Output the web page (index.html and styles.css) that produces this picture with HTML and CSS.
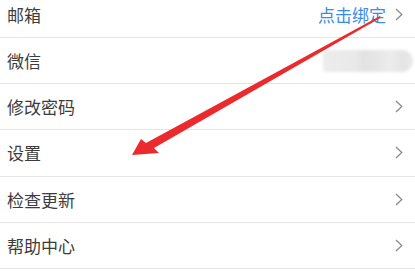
FILE: index.html
```
<!DOCTYPE html>
<html lang="zh">
<head>
<meta charset="utf-8">
<link rel="stylesheet" href="styles.css">
</head>
<body>
<div class="page">
  <ul class="list">
    <li class="row"><span class="label">邮箱</span><span class="right"><span class="link">点击绑定</span><svg class="chev" width="8" height="13" viewBox="0 0 8 13"><polyline points="1,1 6.8,6.5 1,12" fill="none" stroke="#8c8c8c" stroke-width="1.3"/></svg></span></li>
    <li class="row"><span class="label">微信</span><span class="right"><span class="blur"></span></span></li>
    <li class="row"><span class="label">修改密码</span><span class="right"><svg class="chev" width="8" height="13" viewBox="0 0 8 13"><polyline points="1,1 6.8,6.5 1,12" fill="none" stroke="#8c8c8c" stroke-width="1.3"/></svg></span></li>
    <li class="row"><span class="label">设置</span><span class="right"><svg class="chev" width="8" height="13" viewBox="0 0 8 13"><polyline points="1,1 6.8,6.5 1,12" fill="none" stroke="#8c8c8c" stroke-width="1.3"/></svg></span></li>
    <li class="row"><span class="label">检查更新</span><span class="right"><svg class="chev" width="8" height="13" viewBox="0 0 8 13"><polyline points="1,1 6.8,6.5 1,12" fill="none" stroke="#8c8c8c" stroke-width="1.3"/></svg></span></li>
    <li class="row"><span class="label">帮助中心</span><span class="right"><svg class="chev" width="8" height="13" viewBox="0 0 8 13"><polyline points="1,1 6.8,6.5 1,12" fill="none" stroke="#8c8c8c" stroke-width="1.3"/></svg></span></li>
  </ul>
  <svg class="arrow" width="415" height="271" viewBox="0 0 415 271">
    <polygon points="132,155 159,153 154,148 381,17.5 380,16 146,143 141,139" fill="#ea2a2c"/>
  </svg>
</div>
</body>
</html>
```
FILE: styles.css
```
html, body {
  margin: 0;
  padding: 0;
  background: #ffffff;
}
.page {
  position: relative;
  width: 415px;
  height: 271px;
  overflow: hidden;
  font-family: "Noto Sans CJK SC", "Noto Sans", sans-serif;
}
.list {
  list-style: none;
  margin: -8.2px 0 0 0;
  padding: 0;
}
.row {
  height: 45.2px;
  border-bottom: 1px solid #e4e4e4;
  display: flex;
  align-items: center;
  justify-content: space-between;
  padding: 0 12px 0 7px;
  font-size: 17px;
  color: #3c3c3c;
}
.right {
  display: flex;
  align-items: center;
  gap: 9px;
}
.link {
  color: #3b8ce3;
}
.chev {
  display: block;
}
.blur {
  width: 90px;
  height: 22px;
  margin-right: -10px;
  border-radius: 4px 11px 11px 4px;
  background: linear-gradient(90deg, #ececec 0%, #e9e9e9 35%, #e2e2e2 45%, #e6e6e6 60%, #ececec 75%, #e4e4e4 90%, #ebebeb 100%);
  filter: blur(1.5px);
}
.arrow {
  position: absolute;
  left: 0;
  top: 0;
  filter: blur(0.4px);
}
```
